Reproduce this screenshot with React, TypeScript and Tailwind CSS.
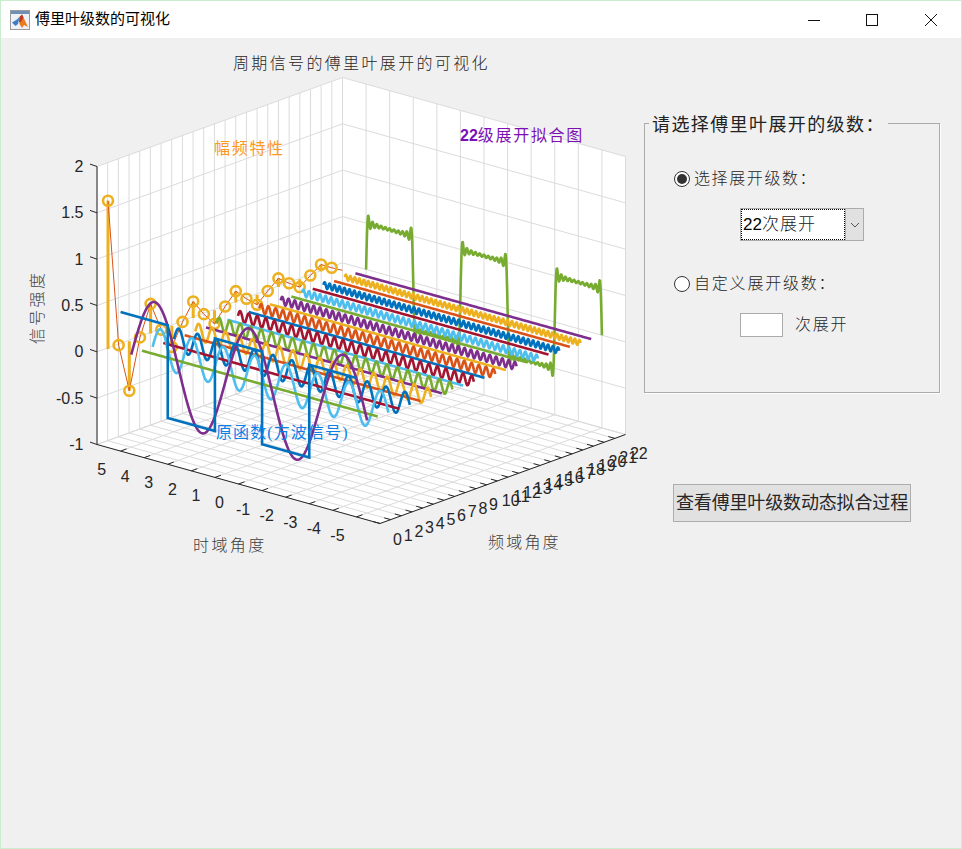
import React from "react";

const SANS = "font-['Liberation_Sans','Noto_Sans_CJK_SC',sans-serif]";
const CJK = "font-['Liberation_Serif','Noto_Sans_CJK_SC',serif]";

const W = 283; // t extent in px
const F = 245.5; // f extent in px
const TY = 79;
const FY = 89;
const ZH = 92.67;
const P = (t: number, f: number, z: number): [number, number] => {
  const u = (t + 6) / 12;
  const v = f / 23;
  return [380 - W * u + F * v, 523.5 - TY * u - FY * v - (z + 1) * ZH];
};
const pt = (p: [number, number]) => `${p[0].toFixed(2)},${p[1].toFixed(2)}`;
const seg = (a: [number, number], b: [number, number]) => `M${pt(a)}L${pt(b)}`;

const COLORS = ["#0072BD", "#D95319", "#EDB120", "#7E2F8E", "#77AC30", "#4DBEEE", "#A2142F"];
// colour of the curve in the plane f = k
const colorOf = (k: number) => (k === 0 ? COLORS[0] : COLORS[(k + 2) % 7]);

const range = (a: number, b: number) => Array.from({ length: b - a + 1 }, (_, i) => a + i);
const ts = range(0, 500).map((i) => 5 - i * 0.02);

const harmonic = (k: number, t: number) =>
  k % 2 === 0 ? 0 : ((2 / Math.PI) * (k % 4 === 1 ? 1 : -1) * Math.cos((k * Math.PI * t) / 2)) / k;

const wavePath = (k: number) => "M" + ts.map((t) => pt(P(t, k, harmonic(k, t)))).join("L");
const fitPath = () =>
  "M" +
  ts
    .map((t) => {
      let s = 0;
      for (let k = 1; k <= 21; k += 2) s += harmonic(k, t);
      return pt(P(t, 23, s));
    })
    .join("L");
const squarePath = () => {
  const pts: [number, number, number][] = [
    [5, 0, 0.5],
    [3, 0, 0.5],
    [3, 0, -0.5],
    [1, 0, -0.5],
    [1, 0, 0.5],
    [-1, 0, 0.5],
    [-1, 0, -0.5],
    [-3, 0, -0.5],
    [-3, 0, 0.5],
    [-5, 0, 0.5],
  ];
  return "M" + pts.map((p) => pt(P(p[0], p[1], p[2]))).join("L");
};

const amp = (k: number) => (k % 2 === 1 ? 0 : ((k % 4 === 0 ? 1 : -1) * 1.6) / (k + 1));
const spec = (k: number, z: number): [number, number] => [108 + 10.65 * k, 349 - 3.87 * k - ZH * z];

function Axes() {
  const tTicks = range(-5, 5);
  const fTicks = range(0, 22);
  const zTicks = [-1, -0.5, 0, 0.5, 1, 1.5, 2];
  let grid = "";
  // walls: vertical + horizontal lines
  [...fTicks, 23].forEach((f) => {
    grid += seg(P(6, f, -1), P(6, f, 2));
    grid += seg(P(6, f, -1), P(-6, f, -1));
  });
  [...tTicks, 6, -6].forEach((t) => {
    grid += seg(P(t, 23, -1), P(t, 23, 2));
    grid += seg(P(t, 23, -1), P(t, 0, -1));
  });
  zTicks.forEach((z) => {
    grid += seg(P(6, 0, z), P(6, 23, z));
    grid += seg(P(6, 23, z), P(-6, 23, z));
  });

  let axis = seg(P(6, 0, -1), P(6, 0, 2)) + seg(P(6, 0, -1), P(-6, 0, -1)) + seg(P(-6, 0, -1), P(-6, 23, -1));
  zTicks.forEach((z) => {
    const a = P(6, 0, z);
    axis += `M${pt(a)}L${a[0] - 7},${(a[1] - 2.4).toFixed(2)}`;
  });
  tTicks.forEach((t) => {
    const a = P(t, 0, -1);
    axis += `M${pt(a)}L${a[0] + 6},${(a[1] - 2.2).toFixed(2)}`;
  });
  fTicks.forEach((f) => {
    const a = P(-6, f, -1);
    axis += `M${pt(a)}L${a[0] - 6.5},${(a[1] - 1.8).toFixed(2)}`;
  });

  const wallL = [P(6, 0, -1), P(6, 0, 2), P(6, 23, 2), P(6, 23, -1)].map(pt).join(" ");
  const wallR = [P(6, 23, -1), P(6, 23, 2), P(-6, 23, 2), P(-6, 23, -1)].map(pt).join(" ");
  const floor = [P(6, 0, -1), P(6, 23, -1), P(-6, 23, -1), P(-6, 0, -1)].map(pt).join(" ");

  const thin = "M" + range(0, 22).map((k) => pt(spec(k, amp(k)))).join("L");
  const stems = range(0, 21).map((k) => seg(spec(k, 0), spec(k, amp(k)))).join("");

  const tickCls = `${SANS} text-[16px] fill-[#262626]`;
  const labelCls = `${CJK} text-[16px] fill-[#404040] font-light`;

  return (
    <svg width={639} height={811} viewBox="1 38 639 811" className="shrink-0 block overflow-visible" role="img">
      <polygon points={wallL} fill="#fff" />
      <polygon points={wallR} fill="#fff" />
      <polygon points={floor} fill="#fff" />
      <path d={grid} stroke="#dbdbdb" strokeWidth={1} fill="none" />
      <path d={stems} stroke="#EDB120" strokeWidth={3} fill="none" />
      <path d={thin} stroke="#D95319" strokeWidth={1} fill="none" />
      {range(0, 21).map((k) => {
        const c = spec(k, amp(k));
        return <circle key={k} cx={c[0]} cy={c[1]} r={5} fill="none" stroke="#EDB120" strokeWidth={2.6} />;
      })}
      <path d={fitPath()} stroke="#77AC30" strokeWidth={2.6} fill="none" strokeLinejoin="round" />
      {range(1, 22)
        .reverse()
        .map((k) => (
          <path key={k} d={wavePath(k)} stroke={colorOf(k)} strokeWidth={2.6} fill="none" strokeLinejoin="round" />
        ))}
      <path d={squarePath()} stroke="#0072BD" strokeWidth={2.6} fill="none" strokeLinejoin="miter" />
      <path d={axis} stroke="#262626" strokeWidth={1} fill="none" />

      {zTicks.map((z) => (
        <text key={z} x={83.5} y={P(6, 0, z)[1] + 5.5} textAnchor="end" className={tickCls}>
          {z}
        </text>
      ))}
      {tTicks.map((t) => {
        const a = P(t, 0, -1);
        return (
          <text key={t} x={a[0] - 19} y={a[1] + 24} textAnchor="middle" className={tickCls}>
            {t}
          </text>
        );
      })}
      {fTicks.map((f) => {
        const a = P(-6, f, -1);
        return (
          <text key={f} x={a[0] + (f < 10 ? 17.5 : 24)} y={a[1] + 21} textAnchor="middle" className={tickCls}>
            {f}
          </text>
        );
      })}

      <text x={233} y={69} className={`${CJK} text-[16px] tracking-[2.35px] fill-[#262626] font-light`}>
        周期信号的傅里叶展开的可视化
      </text>
      <text x={214} y={154} className={`${CJK} text-[16px] tracking-[1.7px] fill-[#fb9a1e]`}>
        幅频特性
      </text>
      <text x={460} y={141} className={`${CJK} text-[16px] tracking-[1.7px] fill-[#7d10b5]`}>
        <tspan className={`${SANS} font-bold tracking-normal`}>22</tspan>级展开拟合图
      </text>
      <text x={216} y={438} className={`${CJK} text-[16px] tracking-[1.1px] fill-[#0b80e6]`}>
        原函数(方波信号)
      </text>
      <text x={193} y={551} className={`${labelCls} tracking-[2.4px]`}>
        时域角度
      </text>
      <text x={488} y={548} className={`${labelCls} tracking-[2.2px]`}>
        频域角度
      </text>
      <text transform="translate(43 344) rotate(-90)" className={`${labelCls} tracking-[2.3px]`}>
        信号强度
      </text>
    </svg>
  );
}

function MatlabIcon() {
  return (
    <svg width={20} height={20} viewBox="0 0 20 20" className="shrink-0">
      <rect x={0.5} y={0.5} width={19} height={19} fill="#eef1f5" stroke="#9a9a9a" />
      <rect x={1} y={1} width={18} height={3} fill="#6f8fb5" />
      <path d="M2 12.5l5-3 2.5-2.5L8 14l-2.5 2z" fill="#3b7fc4" />
      <path d="M9.5 7L12 4.5 18 17l-4-2-2 3-2.5-4z" fill="#ee7a1f" />
      <path d="M9.5 7L12 4.5l1.5 3-3 5-1.5-.5z" fill="#c2381f" />
    </svg>
  );
}

function Radio({ on }: { on?: boolean }) {
  return (
    <span className="w-4 h-4 rounded-full border border-[#333] bg-white flex items-center justify-center shrink-0">
      {on && <span className="w-[10px] h-[10px] rounded-full bg-[#333]" />}
    </span>
  );
}

export default function App() {
  return (
    <div className="w-[962px] h-[849px] flex flex-col overflow-hidden border border-[#c9eecd] bg-[#f0f0f0] text-[#262626]">
      <div className="h-[37px] bg-white flex items-center pl-[9px] shrink-0">
        <MatlabIcon />
        <span className={`${SANS} ml-[5px] text-[15px] text-black`}>傅里叶级数的可视化</span>
        <div className="ml-auto flex h-full">
          <div className="w-[58px] flex items-center justify-center">
            <svg width={12} height={12} viewBox="0 0 12 12">
              <path d="M0 6.5h12" stroke="#111" fill="none" />
            </svg>
          </div>
          <div className="w-[58px] flex items-center justify-center">
            <svg width={12} height={12} viewBox="0 0 12 12">
              <rect x={0.5} y={0.5} width={11} height={11} stroke="#111" fill="none" />
            </svg>
          </div>
          <div className="w-[60px] flex items-center justify-center">
            <svg width={12} height={12} viewBox="0 0 12 12">
              <path d="M0 0l12 12M12 0L0 12" stroke="#111" fill="none" />
            </svg>
          </div>
        </div>
      </div>
      <div className="flex flex-1 min-h-0">
        <Axes />
        <div className={`${CJK} flex-1 pt-[73px] pl-[4px] font-light`}>
          <fieldset className="w-[296px] h-[282px] border border-[#ababab] shadow-[1px_1px_0_#fff]">
            <legend className="ml-[4px] px-[3px] pt-[4px] text-[18px] leading-[20px] tracking-[1.4px] text-[#222] font-normal">
              请选择傅里叶展开的级数：
            </legend>
            <div className="pl-[29px]">
              <div className="flex items-center gap-[4px] mt-[34px] h-[20px] text-[16px] tracking-[1.6px]">
                <Radio on />
                <span>选择展开级数：</span>
              </div>
              <div className="ml-[66px] mt-[19px] w-[124px] h-[33px] flex border border-[#ababab] bg-white">
                <div className="flex-1 border border-dotted border-black flex items-center pl-[1px] text-[17px] tracking-[1px] text-[#222]">
                  <span className={`${SANS} text-black tracking-normal`}>22</span>次展开
                </div>
                <div className="w-[18px] bg-[#e1e1e1] border-l border-[#ababab] flex items-center justify-center">
                  <svg width={10} height={6} viewBox="0 0 10 6">
                    <path d="M1 1l4 4 4-4" stroke="#555" fill="none" />
                  </svg>
                </div>
              </div>
              <div className="flex items-center gap-[4px] mt-[33px] h-[20px] text-[16px] tracking-[1.8px]">
                <Radio />
                <span>自定义展开级数：</span>
              </div>
              <div className="flex items-center ml-[66px] mt-[19px]">
                <div className="w-[43px] h-[24px] bg-white border border-[#ababab]" />
                <span className="ml-[12px] text-[16px] tracking-[1.8px]">次展开</span>
              </div>
            </div>
          </fieldset>
          <button className="block ml-[29px] mt-[91px] w-[238px] h-[38px] bg-[#e1e1e1] border border-[#adadad] text-[18px] leading-[34px] whitespace-nowrap tracking-[-0.15px] font-normal">
            查看傅里叶级数动态拟合过程
          </button>
        </div>
      </div>
    </div>
  );
}
